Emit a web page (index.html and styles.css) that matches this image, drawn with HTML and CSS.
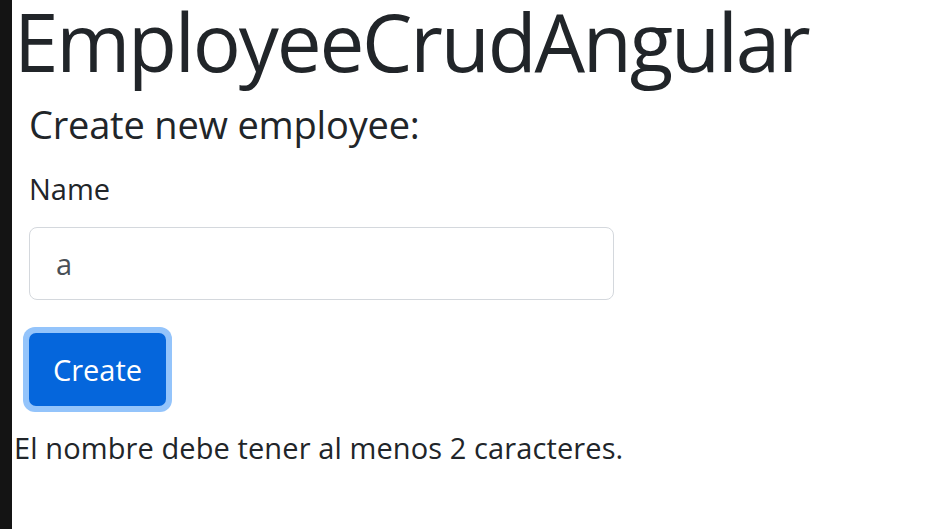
FILE: index.html
```html
<!DOCTYPE html>
<html>
<head>
<meta charset="utf-8">
<link rel="stylesheet" href="styles.css">
</head>
<body>
<div class="app">
  <div class="sidebar"></div>
  <main class="content">
    <h1 class="title">EmployeeCrudAngular</h1>
    <form class="form">
      <h3 class="subtitle">Create new employee:</h3>
      <label class="label" for="name">Name</label>
      <div class="input">a</div>
      <div class="btn-wrap"><button type="button" class="btn">Create</button></div>
    </form>
    <p class="error">El nombre debe tener al menos 2 caracteres.</p>
  </main>
</div>
</body>
</html>
```
FILE: styles.css
```css
html, body { margin: 0; padding: 0; background: #fff; }
body { font-family: "Open Sans", "Noto Sans", sans-serif; color: #212529; }
.app { display: flex; height: 529px; }
.sidebar { width: 12px; background: #141414; flex: none; }
.content { flex: 1; padding-left: 2px; min-width: 0; }
.title { margin: 0; font-size: 80px; font-weight: 400; line-height: 82px; letter-spacing: -2.2px; white-space: nowrap; }
.form { padding-left: 15px; display: flex; flex-direction: column; align-items: flex-start; }
.subtitle { margin: 20px 0 0; font-size: 38px; font-weight: 500; line-height: 44px; letter-spacing: -0.2px; }
.label { margin-top: 23px; font-size: 29px; line-height: 40px; }
.input { margin-top: 18px; width: 557px; height: 71px; border: 1px solid #d4d8dd; border-radius: 8px; padding-left: 26px; display: flex; align-items: center; font-size: 29px; color: #495057; }
.btn-wrap { margin-top: 27px; margin-left: -6px; padding: 6px; border-radius: 12px; background: #94c4fb; }
.btn { display: block; width: 137px; height: 73px; border: 0; border-radius: 7px; background: #0566dc; color: #fff; font-family: inherit; font-size: 29px; padding: 0; }
.error { margin: 16px 0 0; font-size: 29px; line-height: 40px; letter-spacing: 0.1px; }
```
